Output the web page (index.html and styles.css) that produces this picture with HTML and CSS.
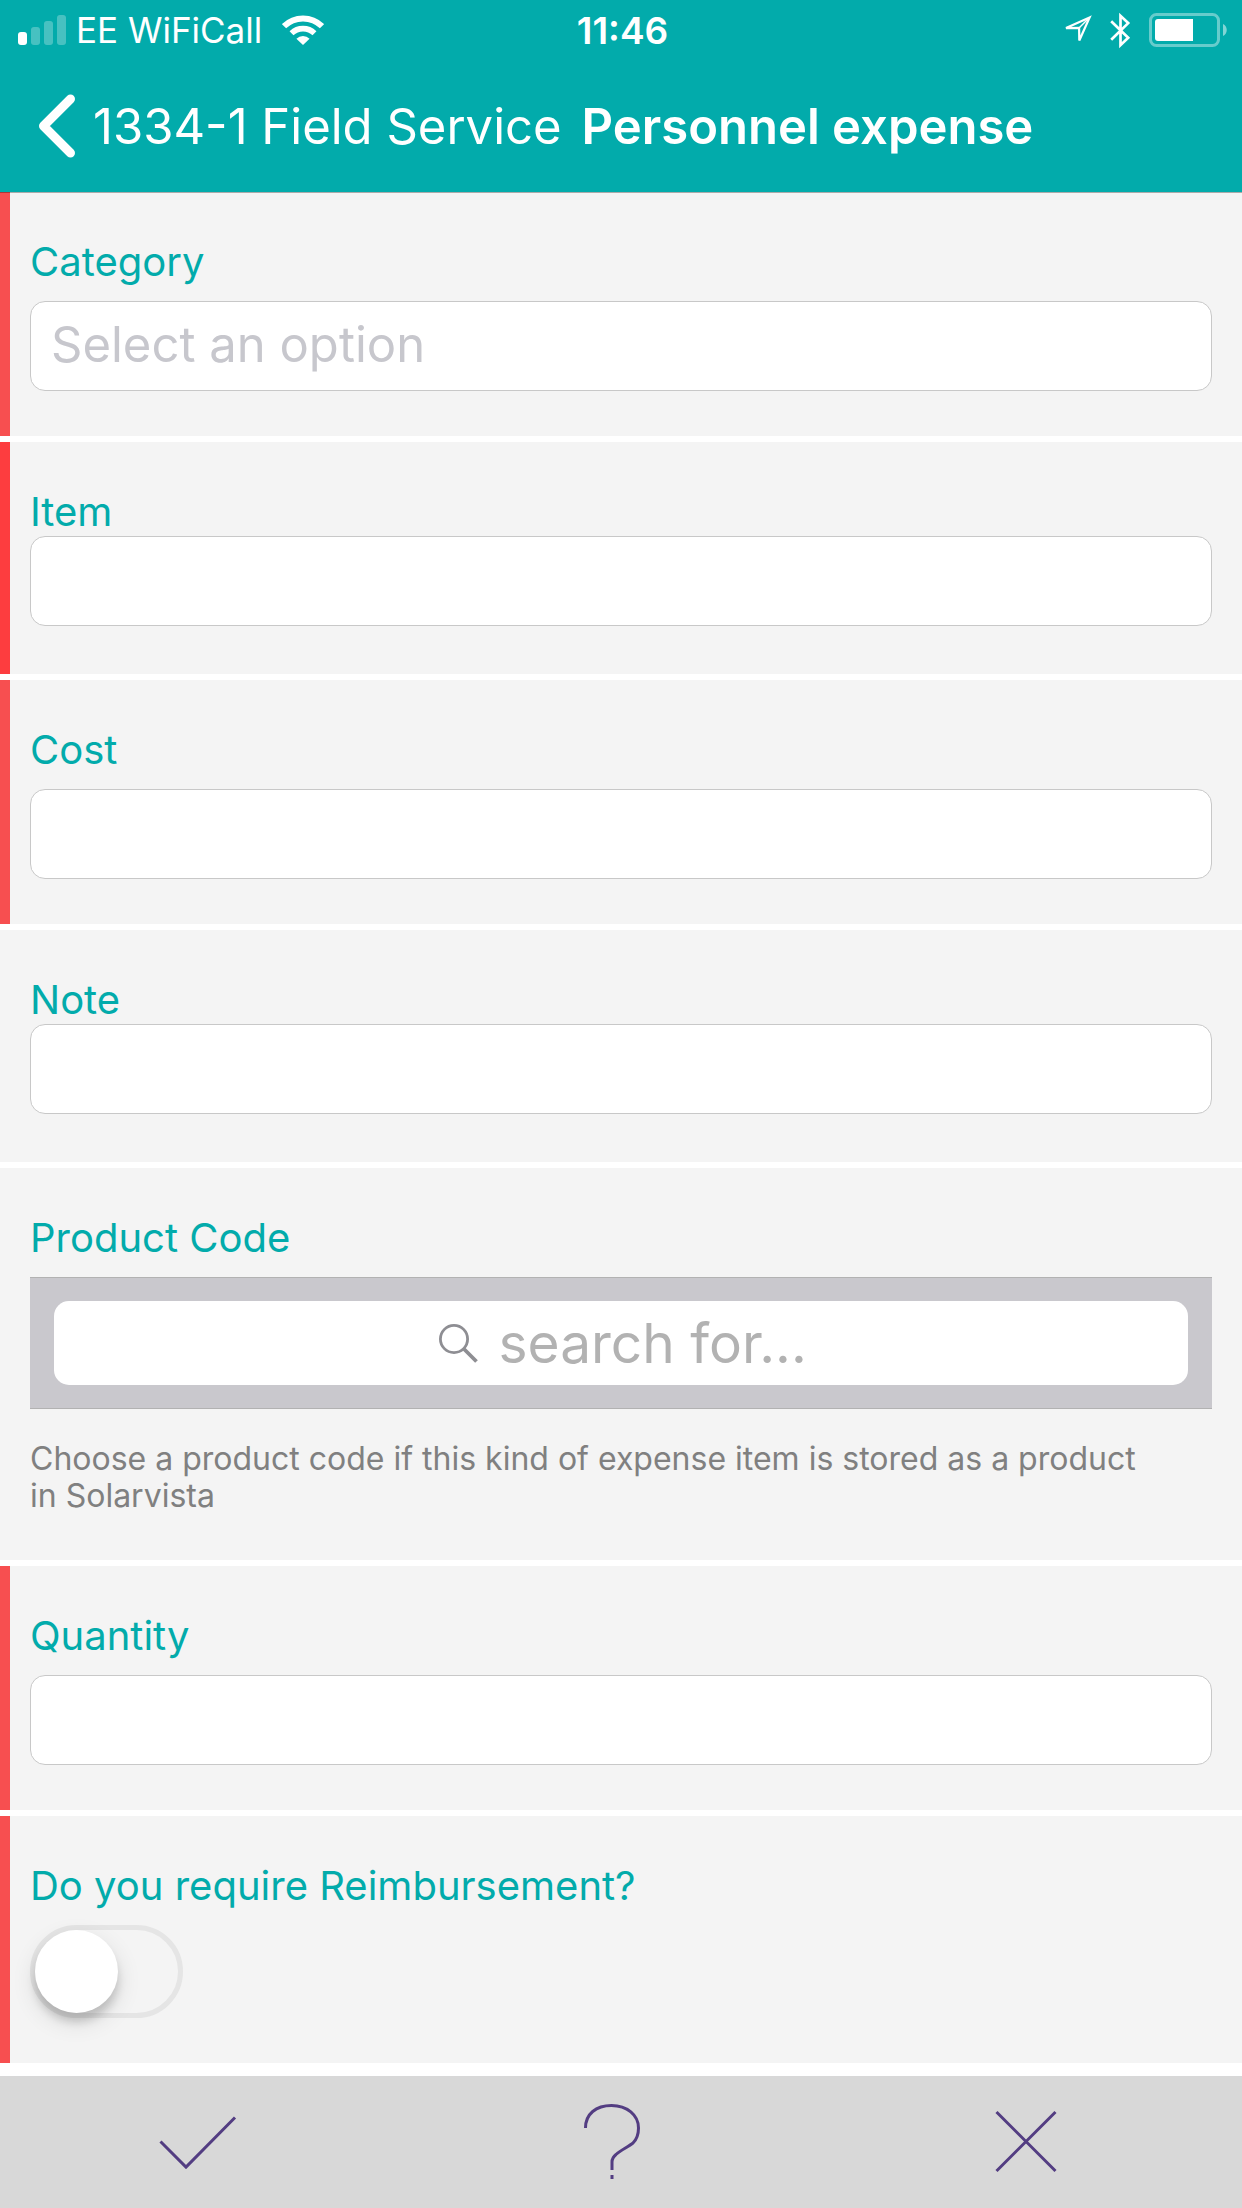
FILE: index.html
```html
<!DOCTYPE html>
<html lang="en">
<head>
  <meta charset="UTF-8">
  <meta name="viewport" content="width=device-width, initial-scale=1.0">
  <title>Personnel expense</title>
  <link rel="stylesheet" href="styles.css">
</head>
<body>
  <header class="header">
    <div class="status-bar">
      <div class="status-left">
        <svg class="signal" width="48" height="30" viewBox="0 0 48 30" fill="#fff">
          <rect x="0" y="17" width="9" height="13" rx="3"/>
          <g opacity="0.27">
            <rect x="13" y="12" width="9" height="18" rx="3"/>
            <rect x="26" y="6" width="9" height="24" rx="3"/>
            <rect x="39" y="0" width="9" height="30" rx="3"/>
          </g>
        </svg>
        <span>EE WiFiCall</span>
        <svg class="wifi" width="42" height="30" viewBox="0 0 42 30">
          <path d="M2 11.2a27 27 0 0 1 38 0" fill="none" stroke="#fff" stroke-width="6"/>
          <path d="M9.5 18.3a16.5 16.5 0 0 1 23 0" fill="none" stroke="#fff" stroke-width="5.6"/>
          <path d="M21 30l-6.6-6.3a9.6 9.6 0 0 1 13.2 0z" fill="#fff"/>
        </svg>
      </div>
      <div class="status-time">11:46</div>
      <div class="status-right">
        <svg width="30" height="30" viewBox="0 0 30 30">
          <path d="M27.6 2.4L4 13.1l13.1-.3.2 12.7z" fill="none" stroke="#fff" stroke-width="2.2"/>
          <path d="M27 3L17 13" stroke="#fff" stroke-width="1.4"/>
        </svg>
        <svg width="21" height="37" viewBox="0 0 21 37">
          <path d="M1.2 9.2l17 16.6-7.7 7.4V3.8l7.7 7.3-17 16.7" fill="none" stroke="#fff" stroke-width="2.7"/>
        </svg>
        <svg width="78" height="34" viewBox="0 0 78 34">
          <rect x="1.5" y="1.5" width="68" height="31" rx="6" fill="none" stroke="#fff" stroke-width="3" opacity="0.4"/>
          <path d="M9 6h35v22H9a3 3 0 0 1-3-3V9a3 3 0 0 1 3-3z" fill="#fff"/>
          <path d="M74 11c5 2 5 10 0 12z" fill="#fff" opacity="0.5"/>
        </svg>
      </div>
    </div>
    <nav class="nav-bar">
      <a class="back" href="#">
        <svg width="37" height="64" viewBox="0 0 37 64">
          <path d="M32.5 5L5.5 32l27 27" fill="none" stroke="#fff" stroke-width="9" stroke-linecap="round" stroke-linejoin="round"/>
        </svg>
        <span>1334-1 Field Service</span>
      </a>
      <h1 class="title">Personnel expense</h1>
    </nav>
  </header>

  <main class="form">
    <div class="row required">
      <label for="category">Category</label>
      <select class="field placeholder" id="category">
        <option>Select an option</option>
      </select>
    </div>
    <div class="row required missing tight">
      <label for="item">Item</label>
      <input class="field" type="text" id="item">
    </div>
    <div class="row required">
      <label for="cost">Cost</label>
      <input class="field" type="text" id="cost">
    </div>
    <div class="row tight">
      <label for="note">Note</label>
      <input class="field" type="text" id="note">
    </div>
    <div class="row">
      <label for="product">Product Code</label>
      <div class="search">
        <div class="search-box">
          <svg width="39" height="39" viewBox="0 0 39 39" fill="none" stroke="#8e8e93">
            <circle cx="15" cy="15" r="13.6" stroke-width="2.8"/>
            <path d="M24.5 24.5L37.5 37.5" stroke-width="3.8"/>
          </svg>
          <input type="text" id="product" placeholder="search for...">
        </div>
      </div>
      <p class="help">Choose a product code if this kind of expense item is stored as a product in Solarvista</p>
    </div>
    <div class="row required">
      <label for="quantity">Quantity</label>
      <input class="field" type="text" id="quantity">
    </div>
    <div class="row required">
      <label for="reimbursement">Do you require Reimbursement?</label>
      <input class="switch" type="checkbox" role="switch" id="reimbursement">
    </div>
  </main>

  <footer class="toolbar">
    <button type="button" aria-label="Save">
      <svg width="120" height="120" viewBox="0 0 120 120"><path d="M13.5 59.5L39 85l49-49.5"/></svg>
    </button>
    <button type="button" aria-label="Help">
      <svg width="120" height="120" viewBox="0 0 120 120"><path d="M24.5 46C24.5 32 35 23.5 50.5 23.5S77.500 33 77.500 46C77.500 53 76 57 72 61C67 65 60 68 55 72.500C52 75 51 77 51 80V88M51 93v4"/></svg>
    </button>
    <button type="button" aria-label="Cancel">
      <svg width="120" height="120" viewBox="0 0 120 120"><path d="M21.5 30l59 59M80.500 30l-59 59"/></svg>
    </button>
  </footer>
</body>
</html>
```
FILE: styles.css
```css
* { box-sizing: border-box; }
body { font-family: Inter, "Liberation Sans", sans-serif; display: flex; flex-direction: column; min-height: 100vh; margin: 0; background-color: #fff; }
svg { display: block; flex: none; }

.header { position: relative; background-color: #02abab; color: #fff; box-shadow: 0 1px 0 rgba(0, 0, 0, 0.3); }
.status-bar { display: grid; grid-template-columns: 1fr auto 1fr; align-items: center; height: 60px; padding: 0 15px 0 18px; font-size: 35px; }
.status-left { display: flex; align-items: center; }
.signal { margin-right: 10px; }
.wifi { margin-left: 20px; }
.status-time { font-size: 37px; font-weight: 600; }
.status-right { display: flex; justify-content: flex-end; align-items: center; gap: 18px; }
.nav-bar { display: flex; align-items: center; height: 132px; padding: 0 38px; font-size: 49px; }
.back { display: flex; align-items: center; gap: 18px; color: #fff; text-decoration: none; }
.title { margin: 0 0 0 20px; font-size: 49px; font-weight: 600; }

.form { display: flex; flex-direction: column; flex: 1; gap: 6px; }
.row { padding: 46px 30px; background-color: #f4f4f4; }
.required { padding-left: 20px; padding-bottom: 45px; border-left: 10px solid #f74f50; }
.missing { border-left-color: #fd3d3f; }
.row label { display: block; margin-bottom: 15px; font-size: 40px; line-height: 48px; color: #02abab; }
.tight { padding-bottom: 48px; }
.tight label { margin-bottom: 0; }

.field { display: block; width: 100%; height: 90px; margin: 0; padding: 0 20px 3px; background-color: #fff; border: 1px solid #c8c8c8; border-radius: 15px; font-family: inherit; font-size: 49px; color: #333; appearance: none; }
.placeholder { color: #c7c7cd; }

.search { padding: 23px 24px; background-color: #c9c8cd; border-top: 1px solid #b2b2b2; border-bottom: 1px solid #b2b2b2; }
.search-box { display: flex; justify-content: center; align-items: center; gap: 21px; height: 84px; background-color: #fff; border-radius: 15px; }
.search-box input { width: 305px; padding: 0; border: none; outline: none; background: none; font-family: inherit; font-size: 55px; color: #333; }
.search-box input::placeholder { color: #b2b2b2; opacity: 1; }
.help { margin: 31px 0 0; padding-right: 60px; font-size: 32px; line-height: 37px; color: #808080; }

.switch { display: block; position: relative; width: 153px; height: 93px; margin: 0; border: 5px solid #e5e5e5; border-radius: 47px; appearance: none; }
.switch::before { content: ""; display: block; width: 83px; height: 83px; background-color: #fff; border-radius: 50%; box-shadow: 0 9px 9px rgba(0, 0, 0, 0.15), 0 9px 24px rgba(0, 0, 0, 0.12); }
.switch:checked { background-color: #02abab; border-color: #02abab; }
.switch:checked::before { margin-left: auto; }

.toolbar { display: grid; grid-template-columns: repeat(3, 1fr); height: 132px; background-color: #d8d8d8; }
.toolbar button { display: flex; justify-content: center; align-items: center; padding: 0; border: none; background: none; cursor: pointer; }
.toolbar path { fill: none; stroke: #533d82; stroke-width: 3; }
```
